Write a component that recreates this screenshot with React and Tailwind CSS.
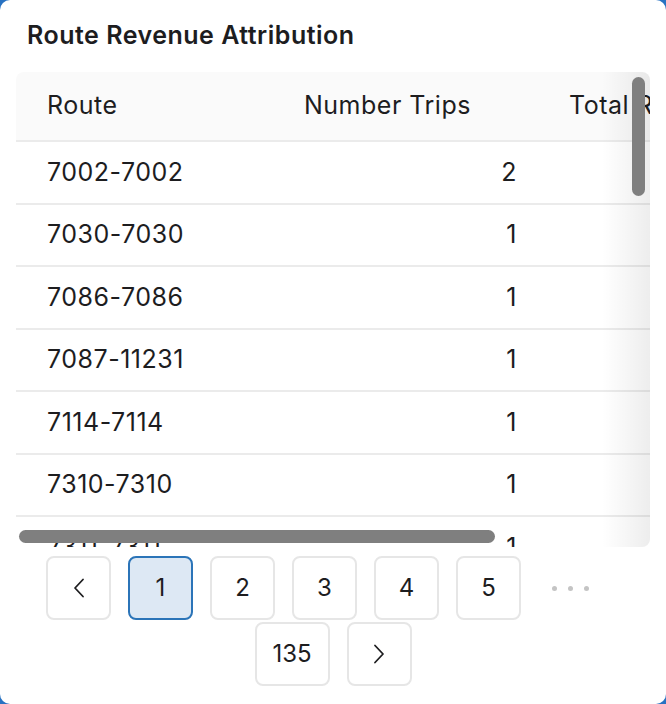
import React from "react"

const rows = [
  { route: "7002-7002", trips: 2, revenue: "$18.40" },
  { route: "7030-7030", trips: 1, revenue: "$9.20" },
  { route: "7086-7086", trips: 1, revenue: "$9.20" },
  { route: "7087-11231", trips: 1, revenue: "$12.75" },
  { route: "7114-7114", trips: 1, revenue: "$9.20" },
  { route: "7310-7310", trips: 1, revenue: "$9.20" },
  { route: "7311-7311", trips: 1, revenue: "$9.20" },
  { route: "7312-7312", trips: 1, revenue: "$9.20" },
]

function Chevron({ dir }) {
  return (
    <svg width="16" height="22" viewBox="0 0 16 22" fill="none" stroke="#1d1d1f" strokeWidth="1.8" strokeLinecap="round" strokeLinejoin="round">
      {dir === "left" ? <path d="M12 2.5 L4 11 L12 19.5" /> : <path d="M4 2.5 L12 11 L4 19.5" />}
    </svg>
  )
}

function PageButton({ children, active, last, wide }) {
  return (
    <div
      className={
        "h-[64px] flex items-center justify-center rounded-[8px] border-2 text-[24px] text-[#1d1d1f] " +
        (wide ? "w-[75px] " : "w-[65px] ") +
        (last ? "" : "mr-[17px] ") +
        (active ? "bg-[#dde8f4] border-[#2b74b8]" : "bg-white border-[#e6e6e6]")
      }
    >
      {children}
    </div>
  )
}

export default function App() {
  return (
    <div className="w-[666px] h-[704px] bg-[#2872c2]" style={{ fontFamily: "Inter, 'Noto Sans', sans-serif" }}>
      <div className="w-full h-full bg-white rounded-[10px] flex flex-col">
        {/* title */}
        <h1 className="pt-[19px] pl-[27px] h-[72px] text-[25px] leading-[32px] font-semibold text-[#1d1d1f] tracking-[0.5px]">
          Route Revenue Attribution
        </h1>

        {/* table */}
        <div className="relative mx-[16px] h-[475px] rounded-[8px] overflow-hidden">
          <div className="w-[1000px] text-[25px] tracking-[0.5px] text-[#1d1d1f]">
            <div className="flex h-[70px] bg-[#fafafa] border-b-2 border-[#ebebeb] items-center">
              <div className="w-[256px] pl-[31px]">Route</div>
              <div className="w-[277px] pl-[32px]">Number Trips</div>
              <div className="w-[300px] pl-[20px] whitespace-nowrap">Total Revenue</div>
            </div>
            {rows.map((r) => (
              <div key={r.route} className="flex h-[62.5px] border-b-2 border-[#ebebeb] items-center">
                <div className="w-[256px] pl-[31px]">{r.route}</div>
                <div className="w-[277px] pr-[32px] text-right">{r.trips}</div>
                <div className="w-[300px] pr-[32px] text-right">{r.revenue}</div>
              </div>
            ))}
          </div>

          {/* right scroll shadow */}
          <div className="absolute top-0 right-0 h-full w-[48px] bg-gradient-to-r from-transparent to-[#00000012] pointer-events-none" />
          {/* overlay scrollbars */}
          <div className="absolute top-[5px] right-[5px] w-[13px] h-[119px] rounded-full bg-[#7f7f7f]" />
          <div className="absolute left-[3px] top-[458px] w-[476px] h-[13px] rounded-full bg-[#7f7f7f]" />
        </div>

        {/* pagination */}
        <div className="mx-[16px] mt-[9px] flex flex-wrap justify-center gap-y-[2px]">
          <PageButton>
            <Chevron dir="left" />
          </PageButton>
          <PageButton active>1</PageButton>
          <PageButton>2</PageButton>
          <PageButton>3</PageButton>
          <PageButton>4</PageButton>
          <PageButton>5</PageButton>
          <div className="w-[65px] h-[64px] mr-[17px] flex items-center justify-center gap-[11px]">
            <span className="w-[5px] h-[5px] rounded-full bg-[#c4c4c4]" />
            <span className="w-[5px] h-[5px] rounded-full bg-[#c4c4c4]" />
            <span className="w-[5px] h-[5px] rounded-full bg-[#c4c4c4]" />
          </div>
          <PageButton wide>135</PageButton>
          <PageButton last>
            <Chevron dir="right" />
          </PageButton>
        </div>
      </div>
    </div>
  )
}
